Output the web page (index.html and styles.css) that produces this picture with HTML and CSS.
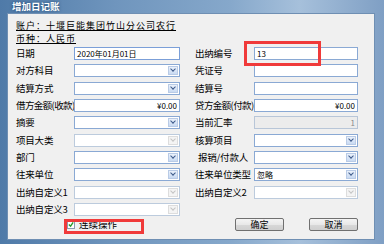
FILE: index.html
```html
<!DOCTYPE html>
<html>
<head>
<meta charset="utf-8">
<link rel="stylesheet" href="styles.css">
</head>
<body>
<div class="window">
  <div class="titlebar"><span class="title">增加日记账</span></div>
  <div class="panel">
    <div class="info">
      <div class="info-line">账户：十堰巨能集团竹山分公司农行</div>
      <div class="info-line">币种：人民币</div>
    </div>
    <div class="form">
      <div class="lbl">日期</div>
      <div class="field focus"><span class="val">2020年01月01日</span></div>
      <div></div>
      <div class="lbl">出纳编号</div>
      <div class="field"><span class="val">13</span></div>

      <div class="lbl">对方科目</div>
      <div class="field combo"><span class="arrow"></span></div>
      <div></div>
      <div class="lbl">凭证号</div>
      <div class="field"></div>

      <div class="lbl">结算方式</div>
      <div class="field combo"><span class="arrow"></span></div>
      <div></div>
      <div class="lbl">结算号</div>
      <div class="field"></div>

      <div class="lbl tight">借方金额(收款)</div>
      <div class="field right"><span class="val">¥0.00</span></div>
      <div></div>
      <div class="lbl tight">贷方金额(付款)</div>
      <div class="field right"><span class="val">¥0.00</span></div>

      <div class="lbl">摘要</div>
      <div class="field combo"><span class="arrow"></span></div>
      <div></div>
      <div class="lbl">当前汇率</div>
      <div class="field right disabled"><span class="val grey">1</span></div>

      <div class="lbl">项目大类</div>
      <div class="field combo disabled-combo"><span class="arrow off"></span></div>
      <div></div>
      <div class="lbl">核算项目</div>
      <div class="field combo"><span class="arrow"></span></div>

      <div class="lbl">部门</div>
      <div class="field combo"><span class="arrow"></span></div>
      <div></div>
      <div class="lbl indent">报销/付款人</div>
      <div class="field combo"><span class="arrow"></span></div>

      <div class="lbl">往来单位</div>
      <div class="field combo"><span class="arrow"></span></div>
      <div></div>
      <div class="lbl">往来单位类型</div>
      <div class="field combo"><span class="val">忽略</span><span class="arrow"></span></div>

      <div class="lbl">出纳自定义1</div>
      <div class="field combo disabled-combo"><span class="arrow off"></span></div>
      <div></div>
      <div class="lbl">出纳自定义2</div>
      <div class="field combo disabled-combo"><span class="arrow off"></span></div>

      <div class="lbl">出纳自定义3</div>
      <div class="field combo disabled-combo"><span class="arrow off"></span></div>
    </div>
    <div class="footer">
      <label class="check"><span class="box"><svg width="7" height="7" viewBox="0 0 7 7"><path d="M1 3.5 L3 5.5 L6 1" fill="none" stroke="#2a9a2a" stroke-width="1.6"/></svg></span><span>连续操作</span></label>
      <div class="buttons">
        <button class="btn">确定</button>
        <button class="btn">取消</button>
      </div>
    </div>
  </div>
  <div class="mark mark-top"></div>
  <div class="mark mark-bottom"></div>
</div>
</body>
</html>
```

FILE: styles.css
```css
html, body {
  margin: 0;
  padding: 0;
  width: 384px;
  height: 244px;
  overflow: hidden;
  font-family: "Noto Sans CJK SC", "DejaVu Sans", sans-serif;
}

.window {
  position: relative;
  width: 384px;
  height: 244px;
  box-sizing: border-box;
  padding: 0 9px 4px 7px;
  background: linear-gradient(90deg, #4f7aa8 0%, #6f95bd 30%, #86a8cb 60%, #a6c0db 78%, #7f9fc4 100%);
  display: flex;
  flex-direction: column;
}

.titlebar {
  height: 13px;
  display: flex;
  align-items: center;
  padding-left: 5px;
}

.title {
  color: #ffffff;
  font-size: 9.5px;
  font-weight: bold;
  line-height: 13px;
  text-shadow: 0 0 3px rgba(0, 40, 80, 0.7);
}

.panel {
  flex: 1;
  background: #f0f0f0;
  border: 1px solid #6f8fb3;
  box-sizing: border-box;
  display: flex;
  flex-direction: column;
}

.info {
  padding: 5px 0 0 8px;
}

.info-line {
  font-size: 9px;
  letter-spacing: 1px;
  line-height: 13px;
  height: 13px;
  color: #000;
  text-decoration: underline;
  text-underline-offset: 1px;
}

.form {
  margin-top: 2px;
  padding-left: 8px;
  display: grid;
  grid-template-columns: 58px 106px 15px 59px 104px;
  grid-auto-rows: 13px;
  row-gap: 4.33px;
  align-items: center;
}

.lbl {
  font-size: 9.5px;
  line-height: 13px;
  color: #000;
  white-space: nowrap;
  letter-spacing: -0.2px;
}

.lbl.tight {
  letter-spacing: -0.6px;
}

.lbl.indent {
  padding-left: 3px;
}

.field {
  height: 13px;
  box-sizing: border-box;
  border: 1px solid #8aa9d4;
  background: #ffffff;
  display: flex;
  align-items: center;
  position: relative;
  padding: 0 2px;
}

.field.focus {
  border-color: #7b9fd8;
}

.field.right {
  justify-content: flex-end;
}

.field.disabled {
  background: #ececec;
  border-color: #b8c6d8;
}

.field.disabled-combo {
  border-color: #bccbdd;
}

.val {
  font-size: 8px;
  line-height: 11px;
  color: #000;
  white-space: nowrap;
  font-family: "Noto Sans CJK SC", "Liberation Sans", sans-serif;
}

.val.grey {
  color: #8a8a8a;
}

.arrow {
  position: absolute;
  right: 1px;
  top: 1px;
  width: 10px;
  height: 9px;
  box-sizing: border-box;
  border: 1px solid #b9cbe6;
  background: linear-gradient(#eaf1fb, #c9daf2);
}

.arrow::after {
  content: "";
  position: absolute;
  left: 2px;
  top: 0px;
  width: 3px;
  height: 3px;
  border-right: 1.5px solid #3d5a8a;
  border-bottom: 1.5px solid #3d5a8a;
  transform: rotate(45deg);
}

.arrow.off {
  background: #f4f4f4;
  border-color: #dddddd;
}

.arrow.off::after {
  border-color: #c4c4c4;
}

.footer {
  margin-top: 2px;
  display: flex;
  align-items: center;
  padding: 0 16px 0 59px;
  height: 14px;
}

.check {
  display: flex;
  align-items: center;
  gap: 4px;
  font-size: 9.5px;
  line-height: 13px;
  color: #000;
}

.box {
  width: 8px;
  height: 8px;
  box-sizing: border-box;
  border: 1px solid #8a9bb3;
  background: #fff;
  display: flex;
  align-items: center;
  justify-content: center;
}

.box svg {
  display: block;
}

.buttons {
  margin-left: auto;
  display: flex;
  gap: 25px;
}

.btn {
  width: 49px;
  height: 13px;
  box-sizing: border-box;
  padding: 0;
  border: 1px solid #707070;
  border-radius: 2px;
  background: linear-gradient(#f4f4f4 0%, #e8e8e8 50%, #d8d8d8 51%, #cfcfcf 100%);
  font-family: "Noto Sans CJK SC", sans-serif;
  font-size: 9px;
  line-height: 11px;
  color: #000;
}

.mark {
  position: absolute;
  border: 3px solid #f03a3a;
  box-sizing: border-box;
}

.mark-top {
  left: 244px;
  top: 41px;
  width: 77px;
  height: 25px;
}

.mark-bottom {
  left: 64px;
  top: 219px;
  width: 80px;
  height: 15px;
}
```
